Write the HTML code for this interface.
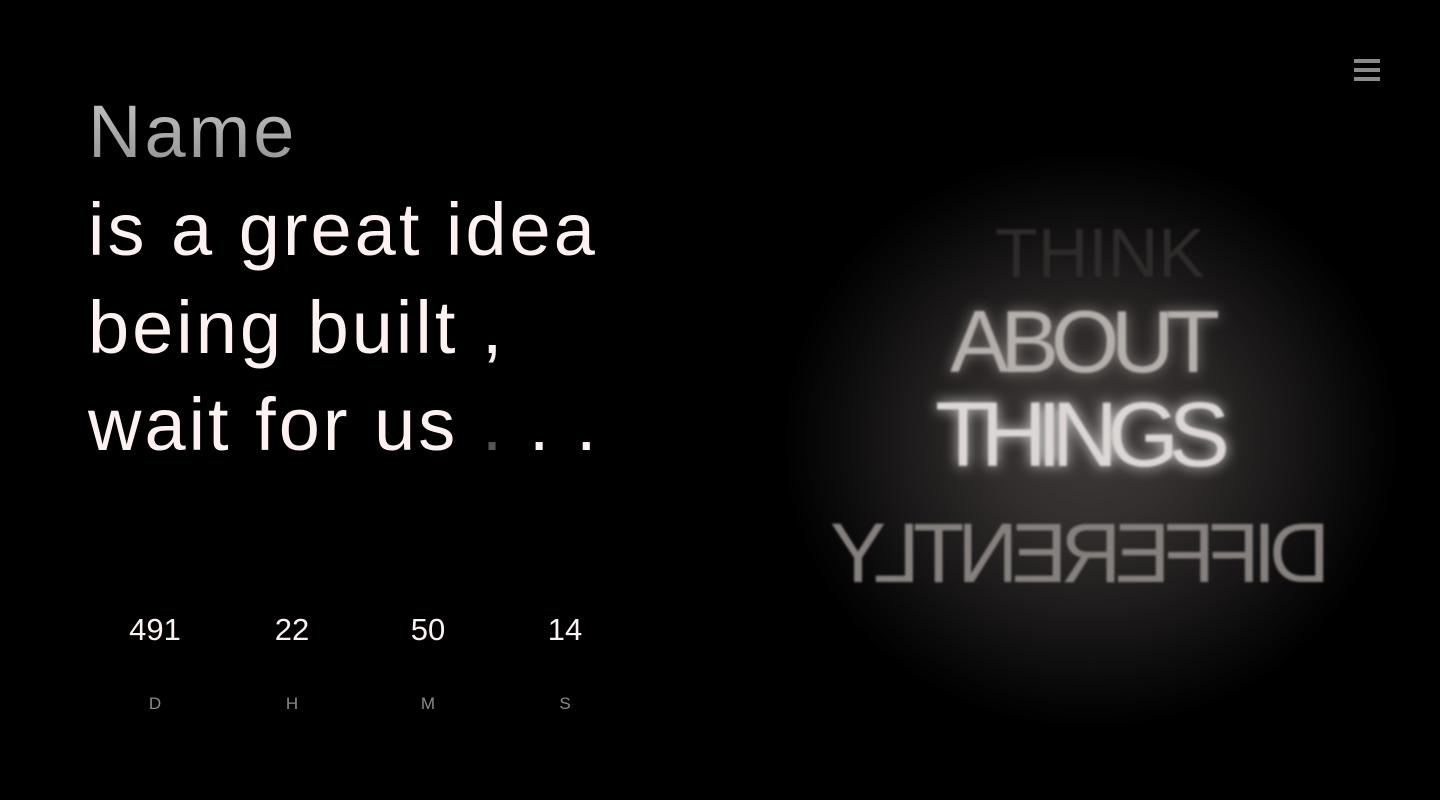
<!DOCTYPE html>
<html><head><meta charset="utf-8">
<style>
html,body{margin:0;padding:0;background:#000;width:1440px;height:800px;overflow:hidden;}
body{position:relative;font-family:"Liberation Sans",sans-serif;}
.h{position:absolute;left:88px;font-size:74px;color:#fdf1f1;white-space:nowrap;letter-spacing:3px;}
.name{background:linear-gradient(180deg,#c8c8c8,#8e8e8e);-webkit-background-clip:text;background-clip:text;color:transparent;}
.num{position:absolute;top:612px;width:120px;text-align:center;font-size:31px;color:#fdf1f1;}
.lab{position:absolute;top:694px;width:120px;text-align:center;font-size:17px;color:#8a8a8a;}
.bar{position:absolute;left:1354px;width:26px;height:4px;background:#8a8a8a;}
.glow{position:absolute;left:780px;top:150px;width:620px;height:580px;
background:radial-gradient(ellipse 50% 50% at 50% 50%,#3e3a38 0%,#322e2d 30%,#1c1a1a 60%,#0a0909 85%,#000 100%);}
</style></head><body>
<div class="h name" style="top:89px">Name</div>
<div class="h" style="top:187px">is a great idea</div>
<div class="h" style="top:285px">being built ,</div>
<div class="h" style="top:382px">wait for us <span style="color:#555">.</span> . .</div>

<div class="num" style="left:95px">491</div>
<div class="num" style="left:232px">22</div>
<div class="num" style="left:368px">50</div>
<div class="num" style="left:505px">14</div>
<div class="lab" style="left:95px">D</div>
<div class="lab" style="left:232px">H</div>
<div class="lab" style="left:368px">M</div>
<div class="lab" style="left:505px">S</div>

<div class="bar" style="top:59px"></div>
<div class="bar" style="top:68px"></div>
<div class="bar" style="top:77px"></div>

<div class="glow"></div>
<svg style="position:absolute;left:0;top:0" width="1440" height="800">
<defs>
<filter id="b"><feGaussianBlur stdDeviation="1"/></filter>
<filter id="glow"><feGaussianBlur stdDeviation="7"/></filter>
<clipPath id="c"><rect x="900" y="222" width="400" height="100"/></clipPath>
</defs>
<g font-family="Liberation Sans,sans-serif">
<text x="995" y="277" font-size="70" fill="#2e2b2a" filter="url(#b)" textLength="210" clip-path="url(#c)">THINK</text>
<text x="950" y="372" font-size="88" fill="#8a8481" filter="url(#glow)" textLength="270">ABOUT</text>
<text x="950" y="372" font-size="88" fill="#b5afac" filter="url(#b)" textLength="270">ABOUT</text>
<text x="935" y="466" font-size="92" fill="#ddd" filter="url(#glow)" textLength="295">THINGS</text>
<text x="935" y="466" font-size="92" fill="#dcd6d4" filter="url(#b)" textLength="295">THINGS</text>
<g transform="translate(2160,0) scale(-1,1)">
<text x="830" y="582" font-size="84" fill="#85807d" filter="url(#b)" textLength="500">DIFFERENTLY</text>
</g>
</g>
</svg>
</body></html>
